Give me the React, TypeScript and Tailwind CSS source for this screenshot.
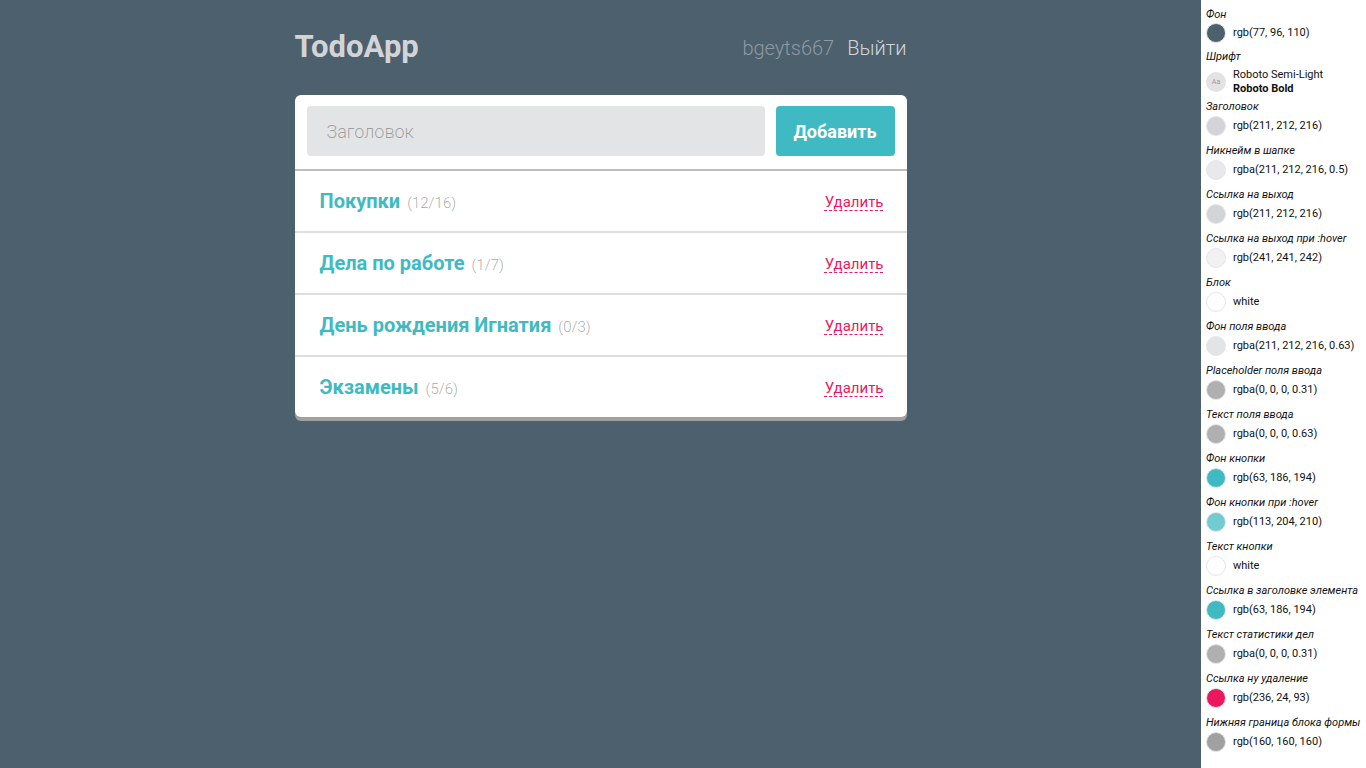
const lists = [
  { title: "Покупки", done: 12, total: 16 },
  { title: "Дела по работе", done: 1, total: 7 },
  { title: "День рождения Игнатия", done: 0, total: 3 },
  { title: "Экзамены", done: 5, total: 6 },
];

const palette = [
  { label: "Заголовок", color: "rgb(211, 212, 216)", value: "rgb(211, 212, 216)" },
  { label: "Никнейм в шапке", color: "rgba(211, 212, 216, 0.5)", value: "rgba(211, 212, 216, 0.5)" },
  { label: "Ссылка на выход", color: "rgb(211, 212, 216)", value: "rgb(211, 212, 216)" },
  { label: "Ссылка на выход при :hover", color: "rgb(241, 241, 242)", value: "rgb(241, 241, 242)" },
  { label: "Блок", color: "white", value: "white" },
  { label: "Фон поля ввода", color: "rgba(211, 212, 216, 0.63)", value: "rgba(211, 212, 216, 0.63)" },
  { label: "Placeholder поля ввода", color: "rgba(0, 0, 0, 0.31)", value: "rgba(0, 0, 0, 0.31)" },
  { label: "Текст поля ввода", color: "rgba(0, 0, 0, 0.31)", value: "rgba(0, 0, 0, 0.63)" },
  { label: "Фон кнопки", color: "rgb(63, 186, 194)", value: "rgb(63, 186, 194)" },
  { label: "Фон кнопки при :hover", color: "rgb(113, 204, 210)", value: "rgb(113, 204, 210)" },
  { label: "Текст кнопки", color: "white", value: "white" },
  { label: "Ссылка в заголовке элемента", color: "rgb(63, 186, 194)", value: "rgb(63, 186, 194)" },
  { label: "Текст статистики дел", color: "rgba(0, 0, 0, 0.31)", value: "rgba(0, 0, 0, 0.31)" },
  { label: "Ссылка ну удаление", color: "rgb(236, 24, 93)", value: "rgb(236, 24, 93)" },
  { label: "Нижняя граница блока формы", color: "rgb(160, 160, 160)", value: "rgb(160, 160, 160)" },
];

function Swatch({ color }: { color: string }) {
  return (
    <div
      className="w-5 h-5 rounded-full border border-[#e6e6e6] shrink-0"
      style={{ background: color }}
    />
  );
}

function GuideItem({ label, color, value }: { label: string; color: string; value: string }) {
  return (
    <div className="h-[44px] pt-px">
      <div className="italic leading-[14px] whitespace-nowrap">{label}</div>
      <div className="flex items-center gap-[7px] mt-[2px]">
        <Swatch color={color} />
        <span className="whitespace-nowrap">{value}</span>
      </div>
    </div>
  );
}

function StyleGuide() {
  return (
    <aside className="w-[165px] shrink-0 bg-white pl-[5px] pt-[6px] text-[11px] text-[#111] font-['Roboto',sans-serif]">
      <div className="h-[44px] pt-[2px]">
        <div className="italic leading-[14px]">Фон</div>
        <div className="flex items-center gap-[7px] mt-px">
          <Swatch color="rgb(77, 96, 110)" />
          <span>rgb(77, 96, 110)</span>
        </div>
      </div>
      {/* font */}
      <div className="h-[49px]">
        <div className="italic leading-[14px]">Шрифт</div>
        <div className="flex items-center gap-[7px] mt-[4px]">
          <div className="w-5 h-5 rounded-full bg-[#e3e3e3] flex items-center justify-center text-[7px] text-[#999] shrink-0">
            Aa
          </div>
          <div className="leading-[14px]">
            <div>Roboto Semi-Light</div>
            <div className="font-bold">Roboto Bold</div>
          </div>
        </div>
      </div>
      {palette.map((p) => (
        <GuideItem key={p.label} {...p} />
      ))}
    </aside>
  );
}

export default function App() {
  return (
    <div className="flex min-h-screen font-['Roboto',sans-serif]">
      <main className="flex-1 bg-[#4d606e]">
        <div className="w-[612px] mx-auto">
          {/* Header */}
          <header className="h-[95px] flex items-center justify-between">
            <h1 className="text-[31px] font-bold text-[#d3d4d8]">TodoApp</h1>
            <div className="flex items-center gap-[13px] text-[20px] font-light">
              <span className="text-[rgba(211,212,216,0.5)]">bgeyts667</span>
              <a href="#" className="text-[#d3d4d8] hover:text-[#f1f1f2]">
                Выйти
              </a>
            </div>
          </header>

          {/* Card */}
          <div className="bg-white rounded-md shadow-[0_4px_0_#a0a0a0] overflow-hidden">
            <form
              className="flex gap-[11px] px-[12px] pt-[11px] pb-[13px] border-b-2 border-[#bdbdbd]"
              onSubmit={(e) => e.preventDefault()}
            >
              <input
                type="text"
                placeholder="Заголовок"
                className="flex-1 h-[50px] rounded bg-[rgba(211,212,216,0.63)] px-5 text-[18px] font-light text-[rgba(0,0,0,0.63)] placeholder:text-[rgba(0,0,0,0.31)] outline-none"
              />
              <button
                type="submit"
                className="w-[119px] h-[50px] rounded bg-[#3fbac2] hover:bg-[#71ccd2] text-white text-[18px] font-bold"
              >
                Добавить
              </button>
            </form>

            {lists.map((l, i) => (
              <div
                key={l.title}
                className={`flex items-center justify-between pl-[25px] pr-[23px] ${
                  i < lists.length - 1 ? "h-[62px] border-b-2 border-[#dedede]" : "h-[60px]"
                }`}
              >
                <div className="flex items-baseline gap-[7px]">
                  <a href="#" className="text-[20px] font-bold text-[#3fbac2]">
                    {l.title}
                  </a>
                  <span className="text-[15px] font-light text-[rgba(0,0,0,0.36)]">
                    ({l.done}/{l.total})
                  </span>
                </div>
                <a
                  href="#"
                  className="mt-[3px] text-[15px] text-[#ec185d] underline decoration-dashed decoration-1 underline-offset-[3px]"
                >
                  Удалить
                </a>
              </div>
            ))}
          </div>
        </div>
      </main>
      <StyleGuide />
    </div>
  );
}
